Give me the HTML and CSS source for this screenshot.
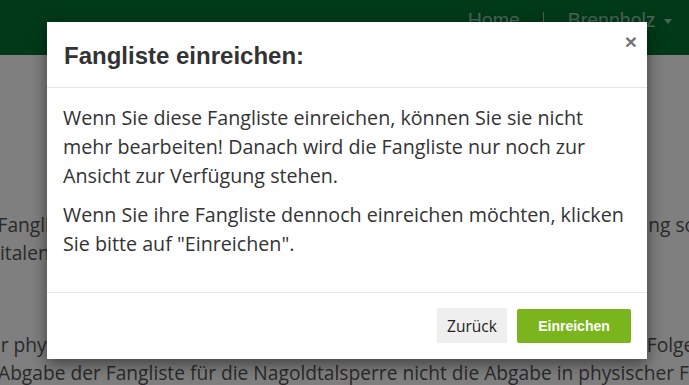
FILE: index.html
```html
<!DOCTYPE html>
<html lang="de">
<head>
<meta charset="utf-8">
<title>Fangliste einreichen</title>
<link rel="stylesheet" href="styles.css">
</head>
<body>
<header class="navbar">
  <nav class="nav">
    <a class="nav-link" href="#">Home</a>
    <span class="nav-divider"></span>
    <a class="nav-link" href="#">Brennholz <span class="caret"></span></a>
  </nav>
</header>
<main class="page">
  <p class="page-text">
    <span class="line l1">Die Fangliste kann ab sofort einfach online eingereicht werden. Die Einreichung sowie</span>
    <span class="line l2">digitalen Fangliste ersetzt die bisherige Abgabe.</span>
  </p>
  <p class="page-text">
    <span class="line l3">Zur physischen Abgabe sind Sie nicht mehr verpflichtet. Beachten Sie dazu Folgendes:</span>
    <span class="line l4">Abgabe der Fangliste für die Nagoldtalsperre nicht die Abgabe in physischer Form ersetzt.</span>
  </p>
</main>
<div class="backdrop"></div>
<div class="modal-wrap">
  <div class="modal">
    <div class="modal-header">
      <h4 class="modal-title">Fangliste einreichen:</h4>
      <button class="close" type="button">×</button>
    </div>
    <div class="modal-body">
      <p>Wenn Sie diese Fangliste einreichen, können Sie sie nicht mehr bearbeiten! Danach wird die Fangliste nur noch zur Ansicht zur Verfügung stehen.</p>
      <p>Wenn Sie ihre Fangliste dennoch einreichen möchten, klicken Sie bitte auf "Einreichen".</p>
    </div>
    <div class="modal-footer">
      <button class="btn btn-default" type="button">Zurück</button>
      <button class="btn btn-primary" type="button">Einreichen</button>
    </div>
  </div>
</div>
</body>
</html>
```
FILE: styles.css
```css
html, body {
  margin: 0;
  padding: 0;
}
body {
  width: 689px;
  height: 385px;
  overflow: hidden;
  position: relative;
  background: #fff;
  font-family: "Open Sans", "Noto Sans", sans-serif;
  color: #333;
}
.navbar {
  height: 55px;
  background: #007530;
  display: flex;
  justify-content: flex-end;
}
.nav {
  display: flex;
  align-items: flex-start;
  padding: 9px 17px 0 0;
  height: 46px;
  font-family: "Liberation Sans", Arial, sans-serif;
  font-size: 19.5px;
}
.nav-link {
  color: rgba(255,255,255,0.6);
  text-decoration: none;
  line-height: 23px;
}
.nav-divider {
  width: 1px;
  height: 30px;
  background: rgba(255,255,255,0.6);
  margin: 3px 24px 0 23px;
}
.caret {
  display: inline-block;
  width: 0;
  height: 0;
  border-top: 5px solid;
  border-left: 4px solid transparent;
  border-right: 4px solid transparent;
  vertical-align: middle;
  margin-left: 3px;
}
.page {
  padding-top: 156px;
}
.page-text {
  font-size: 19.2px;
  line-height: 28px;
  color: #555;
  margin: 0 0 64px;
  white-space: nowrap;
}
.line {
  display: block;
}
.l1 { text-indent: -37px; }
.l2 { text-indent: -27px; }
.l3 { text-indent: -22px; }
.l4 { text-indent: -2px; }
.backdrop {
  position: absolute;
  inset: 0;
  background: rgba(0,0,0,0.5);
}
.modal-wrap {
  position: absolute;
  inset: 0;
  display: flex;
  justify-content: center;
  align-items: flex-start;
  padding: 22px 0 0 5px;
}
.modal {
  width: 600px;
  background: #fff;
  box-shadow: 0 5px 15px rgba(0,0,0,0.5);
}
.modal-header {
  display: flex;
  justify-content: space-between;
  align-items: flex-start;
  padding: 0 10px 0 17px;
  height: 65px;
  border-bottom: 1px solid #e5e5e5;
}
.modal-title {
  margin: 0;
  padding-top: 20px;
  font-family: "Liberation Sans", Arial, sans-serif;
  font-weight: bold;
  font-size: 24px;
  line-height: 28px;
  color: #333;
}
.close {
  border: 0;
  background: none;
  padding: 0;
  margin-top: 8px;
  font-family: "Liberation Sans", Arial, sans-serif;
  font-size: 21px;
  font-weight: bold;
  line-height: 24px;
  color: #000;
  opacity: 0.55;
}
.modal-body {
  padding: 15px 18px 24px 16px;
  font-size: 19.7px;
  line-height: 29px;
}
.modal-body p {
  margin: 0 0 10px;
}
.modal-footer {
  display: flex;
  justify-content: flex-end;
  align-items: flex-start;
  gap: 10px;
  padding: 15px 16px 16px;
  border-top: 1px solid #e5e5e5;
}
.btn {
  border: 0;
  height: 35px;
  padding: 0;
  cursor: pointer;
}
.btn-default {
  width: 70px;
  background: #efefef;
  color: #222;
  font-family: "Open Sans", "Noto Sans", sans-serif;
  font-size: 15.5px;
}
.btn-primary {
  width: 114px;
  height: 34px;
  margin-top: 1px;
  background: #7ab51d;
  color: #fff;
  font-family: "Liberation Sans", Arial, sans-serif;
  font-size: 14px;
  font-weight: bold;
  border-radius: 2px;
}
```
